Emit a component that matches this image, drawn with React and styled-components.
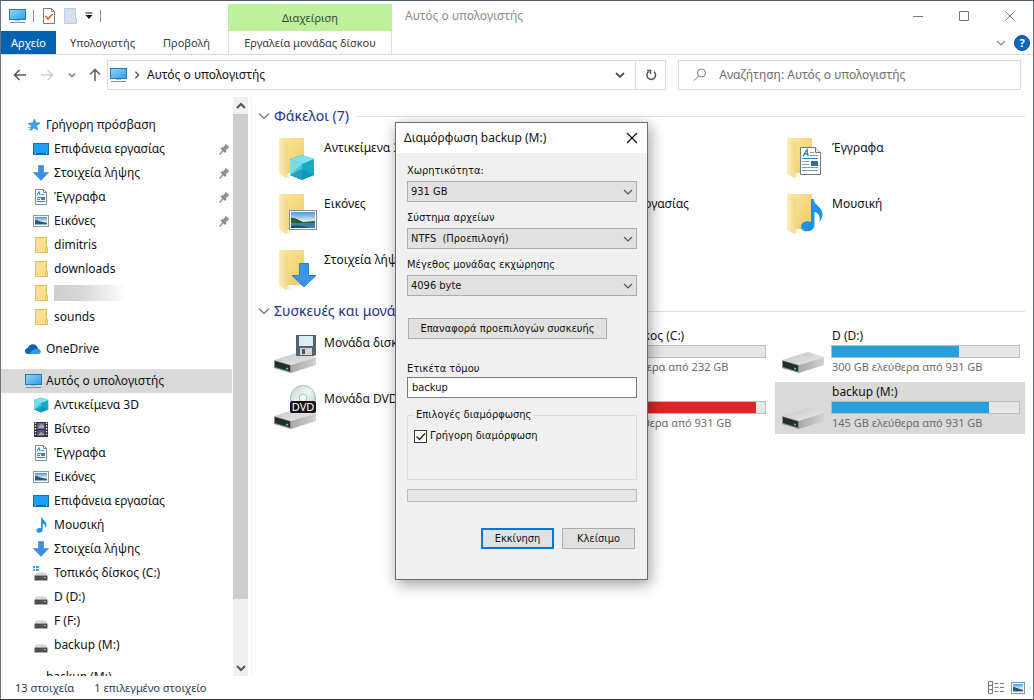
import React from "react";
import styled, { createGlobalStyle, css } from "styled-components";

const uiFont = '"Noto Sans", "Open Sans", sans-serif';
const dialogFont = '"DejaVu Sans Condensed", "DejaVu Sans", sans-serif';

const GlobalStyle = createGlobalStyle`
  *, *::before, *::after { box-sizing: border-box; }
  body { margin: 0; background: #fff; font: 12px/16px ${uiFont}; color: #111; }
  button, input, select { font: inherit; color: inherit; margin: 0; border-radius: 0; }
  svg { display: block; flex: none; }
`;

/* ---------- window frame ---------- */

const Window = styled.div`
  position: relative;
  display: flex;
  flex-direction: column;
  height: 100vh;
  min-height: 600px;
  border: 1px solid #66727e;
  border-top-color: #4c5a68;
  border-bottom-color: #3c3c3c;
  background: #fff;
  overflow: hidden;
`;

const plainButton = css`
  display: flex;
  align-items: center;
  justify-content: center;
  padding: 0;
  border: 0;
  background: none;
  white-space: nowrap;
`;

const Ribbon = styled.header`
  display: flex;
  flex: none;
  height: 54px;
  border-bottom: 1px solid #d9dadb;
`;

const RibbonLeft = styled.div`
  display: flex;
  flex-direction: column;
  width: 227px;
`;

const QuickBar = styled.div`
  display: flex;
  align-items: center;
  gap: 7px;
  height: 30px;
  padding-left: 8px;
`;

const Divider = styled.span`
  width: 1px;
  height: 12px;
  background: #8a8a8a;
`;

const IconButton = styled.button`
  ${plainButton}
`;

const TabRow = styled.div`
  display: flex;
  height: 23px;
  font-size: 11px;
`;

const Tab = styled.button`
  ${plainButton}
  padding: 0 ${(p) => (p.$primary ? 10 : 14)}px;
  color: ${(p) => (p.$primary ? "#fff" : "#3a3a3a")};
  background: ${(p) => (p.$primary ? "#0063b1" : "none")};
`;

const ContextTab = styled.div`
  display: flex;
  flex-direction: column;
  width: 164px;
  padding-top: 3px;
  font-size: 11px;
`;

const ContextTitle = styled.div`
  display: flex;
  align-items: center;
  justify-content: center;
  height: 27px;
  background: #bff09c;
  color: #3a4a30;
`;

const ContextButton = styled.button`
  ${plainButton}
  height: 23px;
  border: solid #dcdcdc;
  border-width: 0 1px;
  color: #3a3a3a;
`;

const RibbonRight = styled.div`
  display: flex;
  flex: 1;
  flex-direction: column;
`;

const TitleRow = styled.div`
  display: flex;
  align-items: center;
  height: 30px;
  padding-left: 13px;
`;

const WindowTitle = styled.h1`
  flex: 1;
  margin: 0;
  font-size: 12px;
  font-weight: 400;
  color: #8b8b8b;
`;

const CaptionButton = styled.button`
  ${plainButton}
  width: 46px;
  height: 30px;
`;

const RibbonTools = styled.div`
  display: flex;
  align-items: center;
  justify-content: flex-end;
  gap: 8px;
  height: 23px;
  padding-right: 3px;
`;

/* ---------- address row ---------- */

const AddressRow = styled.div`
  display: flex;
  flex: none;
  align-items: center;
  height: 42px;
  padding: 0 12px 2px;
`;

const NavButtons = styled.div`
  display: flex;
  align-items: center;
  justify-content: space-between;
  width: 88px;
  margin-right: 6px;
`;

const AddressBox = styled.nav`
  display: flex;
  align-items: center;
  flex: 1;
  height: 30px;
  padding-left: 2px;
  border: 1px solid #d9d9d9;
`;

const Crumb = styled.button`
  ${plainButton}
  margin-left: 6px;
`;

const AddressDrop = styled.button`
  ${plainButton}
  width: 30px;
  height: 28px;
  margin-left: auto;
`;

const Refresh = styled.button`
  ${plainButton}
  width: 30px;
  height: 30px;
  border: 1px solid #d9d9d9;
  border-left: 0;
`;

const SearchBox = styled.label`
  display: flex;
  align-items: center;
  gap: 12px;
  flex: 0 0 34%;
  height: 30px;
  margin-left: 12px;
  padding-left: 14px;
  border: 1px solid #d9d9d9;
`;

const SearchInput = styled.input`
  flex: 1;
  min-width: 0;
  padding: 0;
  border: 0;
  outline: 0;
  background: none;
  &::placeholder { color: #6d6d6d; opacity: 1; }
`;

/* ---------- sidebar ---------- */

const Body = styled.div`
  display: flex;
  flex: 1;
  min-height: 0;
`;

const Sidebar = styled.aside`
  display: flex;
  flex: none;
  width: 251px;
  padding-right: 3px;
  border-right: 1px solid #f3f3f3;
`;

const Tree = styled.nav`
  flex: 1;
  padding-top: 16px;
  overflow: hidden;
`;

const TreeGroup = styled.ul`
  margin: 0 0 8px;
  padding: 0;
  list-style: none;
`;

const TreeLink = styled.a`
  display: flex;
  align-items: center;
  gap: 4px;
  height: 24px;
  padding: 0 2px 0 ${(p) => (p.$root ? 24 : 32)}px;
  margin-right: 1px;
  color: #111;
  text-decoration: none;
  white-space: nowrap;
  background: ${(p) => (p.$selected ? "#d9d9d9" : "none")};
`;

const TreeText = styled.span`
  flex: 1;
`;

const Redacted = styled.span`
  width: 72px;
  height: 16px;
  background: linear-gradient(90deg, #cfcfcf, #d8d8d8 40%, #fff);
`;

const ScrollBar = styled.div`
  display: flex;
  flex-direction: column;
  width: 15px;
  background: #f0f0f0;
`;

const ScrollButton = styled.button`
  ${plainButton}
  height: 17px;
`;

const ScrollTrack = styled.div`
  flex: 1;
`;

const ScrollThumb = styled.div`
  height: 89%;
  background: #cdcdcd;
`;

/* ---------- file list ---------- */

const Content = styled.main`
  flex: 1;
  min-width: 0;
  padding: 9px 8px 0 6px;
`;

const Group = styled.section`
  margin-bottom: 6px;
`;

const GroupHeader = styled.h2`
  display: flex;
  align-items: center;
  height: 20px;
  margin: 0 0 5px;
  font-size: 14px;
  font-weight: 400;
  line-height: 20px;
  color: #1e3287;
  white-space: nowrap;
  &::after {
    content: "";
    flex: 1;
    height: 1px;
    margin-left: 7px;
    background: #e2e2e2;
  }
`;

const GroupTitle = styled.span`
  margin-left: 4px;
`;

const TileGrid = styled.div`
  display: grid;
  grid-template-columns: repeat(3, 1fr);
  gap: 4px;
  padding-left: 9px;
`;

const TileBox = styled.a`
  display: flex;
  gap: 5px;
  height: 52px;
  padding: 2px 5px 0 4px;
  color: #111;
  text-decoration: none;
  white-space: nowrap;
  background: ${(p) => (p.$selected ? "#d9d9d9" : "none")};
`;

const TileText = styled.div`
  display: flex;
  flex: 1;
  flex-direction: column;
  min-width: 0;
  padding-top: ${(p) => (p.$drive ? 0 : 7)}px;
`;

const Meter = styled.div`
  height: 13px;
  margin: 1px 0 0 -1px;
  border: 1px solid #bcbcbc;
  background: #e6e6e6;
`;

const MeterFill = styled.div`
  height: 100%;
  background: ${(p) => (p.$full ? "#da2626" : "#26a0da")};
`;

const FreeSpace = styled.span`
  margin-top: 1px;
  font-size: 11px;
  color: #6d6d6d;
`;

/* ---------- status bar ---------- */

const StatusBar = styled.footer`
  display: flex;
  flex: none;
  align-items: center;
  gap: 20px;
  height: 23px;
  padding: 0 8px 0 14px;
  font-size: 11px;
  color: #1e395b;
`;

const ViewButtons = styled.div`
  display: flex;
  gap: 7px;
  margin-left: auto;
`;

/* ---------- format dialog ---------- */

const Dialog = styled.form`
  position: absolute;
  left: 394px;
  top: 121px;
  width: 253px;
  border: 1px solid #6e6e6e;
  background: #f0f0f0;
  box-shadow: 2px 4px 14px rgba(0, 0, 0, 0.4);
  font: 11px/16px ${dialogFont};
`;

const DialogTitle = styled.div`
  display: flex;
  align-items: center;
  justify-content: space-between;
  height: 30px;
  padding: 0 9px 0 8px;
  background: #fff;
  font: 12px/16px ${uiFont};
`;

const DialogBody = styled.div`
  display: flex;
  flex-direction: column;
  padding: 10px 10px 30px 11px;
`;

const Field = styled.div`
  display: flex;
  flex-direction: column;
  gap: ${(p) => (p.$tight ? 0 : 2)}px;
  margin-bottom: 8px;
`;

const SelectWrap = styled.div`
  display: grid;
  align-items: center;
  & > * { grid-area: 1 / 1; }
  & > svg { justify-self: end; margin-right: 4px; pointer-events: none; }
`;

const Select = styled.select`
  appearance: none;
  height: 21px;
  padding: 0 20px 0 3px;
  border: 1px solid #adadad;
  background: #e1e1e1;
`;

const TextInput = styled.input`
  height: 21px;
  padding: 0 4px;
  border: 1px solid #7a7a7a;
  background: #fff;
`;

const PushButton = styled.button`
  ${plainButton}
  width: ${(p) => (p.$wide ? 199 : 73)}px;
  height: 21px;
  border: ${(p) => (p.$default ? "2px solid #0078d7" : "1px solid #adadad")};
  background: #e1e1e1;
`;

const RestoreRow = styled.div`
  padding: 14px 1px 22px;
`;

const Options = styled.fieldset`
  height: 73px;
  margin: 1px 0 9px;
  padding: 5px 6px 0;
  border: 1px solid #dcdcdc;
`;

const Legend = styled.legend`
  padding: 0 2px;
`;

const CheckLabel = styled.label`
  display: flex;
  align-items: center;
  gap: 3px;
`;

const CheckBox = styled.span`
  display: grid;
  & > * { grid-area: 1 / 1; }
  & > svg { pointer-events: none; }
`;

const CheckInput = styled.input`
  appearance: none;
  width: 13px;
  height: 13px;
  border: 1px solid #333;
  background: #fff;
`;

const FormatProgress = styled.div`
  height: 13px;
  border: 1px solid #bcbcbc;
  background: #e6e6e6;
`;

const Actions = styled.div`
  display: flex;
  justify-content: flex-end;
  gap: 8px;
  margin-top: 26px;
  padding-right: 2px;
`;

/* ---------- drawings ---------- */

const DefsSvg = styled.svg`
  position: absolute;
`;

const Defs = () => (
  <DefsSvg width="0" height="0" aria-hidden="true">
    <defs>
      <linearGradient id="screen" x1="0" y1="0" x2="1" y2="1">
        <stop offset="0" stopColor="#8ed8fb" />
        <stop offset="1" stopColor="#2e9de8" />
      </linearGradient>
      <linearGradient id="folderBack" x1="0" y1="0" x2="1" y2="1">
        <stop offset="0" stopColor="#fbe8a2" />
        <stop offset="1" stopColor="#edca62" />
      </linearGradient>
      <linearGradient id="folderFlap" x1="0" y1="0" x2="1" y2="0">
        <stop offset="0" stopColor="#fdeeb8" />
        <stop offset="1" stopColor="#f0d684" />
      </linearGradient>
      <linearGradient id="driveTop" x1="0" y1="0" x2="1" y2="1">
        <stop offset="0" stopColor="#c3c3c3" />
        <stop offset="1" stopColor="#ececec" />
      </linearGradient>
      <linearGradient id="driveSide" x1="0" y1="0" x2="1" y2="0">
        <stop offset="0" stopColor="#a9a9a9" />
        <stop offset="1" stopColor="#d2d2d2" />
      </linearGradient>
      <linearGradient id="sky" x1="0" y1="0" x2="0" y2="1">
        <stop offset="0" stopColor="#4d97d8" />
        <stop offset="0.55" stopColor="#d6eaf3" />
        <stop offset="1" stopColor="#7eb0c4" />
      </linearGradient>
      <linearGradient id="disc" x1="0" y1="0" x2="1" y2="1">
        <stop offset="0" stopColor="#c3d8d3" />
        <stop offset="0.5" stopColor="#eef6f4" />
        <stop offset="1" stopColor="#aac5bf" />
      </linearGradient>
    </defs>
  </DefsSvg>
);

const Chevron = ({ size = 10, color = "#555", width = 1.2, turn = 0 }) => (
  <svg width={size} height={size} viewBox="0 0 10 10" fill="none" stroke={color} strokeWidth={width}>
    <path d="M1 3l4 4 4-4" transform={`rotate(${turn} 5 5)`} />
  </svg>
);

const PcIcon = () => (
  <svg width="17" height="16" viewBox="0 0 17 16">
    <rect x="0.5" y="1.5" width="16" height="10" fill="url(#screen)" stroke="#2b78ad" />
    <path d="M6 12h5v1H6z" fill="#a9bcc9" />
    <path d="M1 14.5h15" stroke="#6f93ab" />
  </svg>
);

const DesktopIcon = () => (
  <svg width="17" height="16" viewBox="0 0 17 16">
    <rect x="0.5" y="2.5" width="15" height="11" fill="#1ba0f5" stroke="#1471ad" />
    <path d="M1 12.5h14" stroke="#0c5d96" />
    <path d="M2 12.5h1M13 12.5h1" stroke="#d7efff" />
  </svg>
);

const DownIcon = () => (
  <svg width="17" height="16" viewBox="0 0 17 16">
    <path d="M5.5 0.5h5v7h5L8 15.5 0.5 7.5h5z" fill="#3b8fe0" stroke="#3b7fc0" strokeWidth="0.6" />
  </svg>
);

const DocIcon = () => (
  <svg width="17" height="16" viewBox="0 0 17 16">
    <path d="M2.5 0.5h8l3 3v12h-11z" fill="#fff" stroke="#7f8c96" />
    <path d="M10.5 0.5v3h3" fill="none" stroke="#7f8c96" />
    <path d="M4 6l2-3.500 1 3.500M8 5.500h3M4 8.500h8M4 10.500h3M4 12.500h8" fill="none" stroke="#2b86c4" />
    <path d="M8 9h4v2H8z" fill="#2b86c4" />
  </svg>
);

const PictureIcon = () => (
  <svg width="17" height="16" viewBox="0 0 17 16">
    <rect x="0.5" y="2.5" width="15" height="11" fill="#fff" stroke="#8797a3" />
    <rect x="2" y="4" width="12" height="8" fill="url(#sky)" />
    <path d="M2 7c3 0 5 2 12 3v1H2z" fill="#2c5a70" />
  </svg>
);

const SmallFolder = () => (
  <svg width="17" height="16" viewBox="0 0 17 16">
    <path d="M2.500 0.500h11v9.500h1v5.500h-12z" fill="#fbe08b" stroke="#e3bd58" />
    <path d="M12.500 10v5" stroke="#e3bd58" />
  </svg>
);

const StarIcon = () => (
  <svg width="17" height="16" viewBox="0 0 17 16">
    <path d="M9.500 2l1.200 3.800 4.300 0.200-3.400 2.800 1 4.300-3.600-2.300-3.500 2.700 0.900-4.300L3.500 6.300l4.300-0.400z" fill="#3ba4e6" stroke="#2183c4" strokeWidth="0.7" />
    <path d="M3 10.500h3M3.500 12.500h2" stroke="#6bbbec" />
  </svg>
);

const CloudIcon = () => (
  <svg width="17" height="16" viewBox="0 0 17 16">
    <path d="M3 13a3 3 0 0 1 0-6 5 5 0 0 1 9-1.500L14 9l-2 4z" fill="#0f5fb8" />
    <path d="M4 13c2-3 6-6 9.500-5 3 0.500 3.500 5-0.500 5z" fill="#2a9be8" />
  </svg>
);

const CubeShape = () => (
  <>
    <path d="M12 0l12 4v16l-12 5L0 20V4z" fill="#19a9c4" />
    <path d="M12 0l12 4-12 5L0 4z" fill="#7be3ee" />
    <path d="M0 4l12 5v16L0 20z" fill="#43c7dc" />
    <path d="M0 20l12-6 12 6-12 5z" fill="#0f8fb0" opacity="0.7" />
    <path d="M12 9L0 20V4z" fill="#a5eef4" opacity="0.55" />
  </>
);

const CubeIcon = () => (
  <svg width="17" height="16" viewBox="0 -1 25 27">
    <CubeShape />
  </svg>
);

const VideoIcon = () => (
  <svg width="17" height="16" viewBox="0 0 17 16">
    <rect x="1" y="1" width="14" height="15" fill="#2e3238" />
    <path d="M2.500 1.500v14M13.500 1.500v14" stroke="#e6e6e6" strokeWidth="1.400" strokeDasharray="1.400 1.400" />
    <rect x="4.500" y="2" width="7" height="6" fill="#5a6ab4" />
    <rect x="4.500" y="9" width="7" height="6" fill="#4a5aa6" />
    <path d="M5 7l3-4 3 2v2zM5 14l3-3 3 2v1z" fill="#c9a84a" />
  </svg>
);

const NoteShape = () => (
  <path d="M10 0h2.500c0.500 6 9 8 9 15 0 3-1 5-3 8 1-6-1-9-5-10v13c0 8-13.500 8-13.500 2 0-5 6-7 10-5z" fill="#1a93ea" />
);

const MusicIcon = () => (
  <svg width="17" height="16" viewBox="-6 -1 34 34">
    <NoteShape />
  </svg>
);

const SmallDrive = ({ system }) => (
  <svg width="17" height="16" viewBox="0 0 17 16">
    <path d="M3.500 7.500h9l2 3h-13z" fill="#d3d6d8" />
    <rect x="1.500" y="10.500" width="13" height="5" rx="0.500" fill="#4a4e50" />
    <rect x="11" y="12" width="2" height="1" fill="#59d86b" />
    {system && <path d="M0 1h2v2H0zM3 1h3v2H3zM0 4h2v2H0zM3 4h3v2H3z" fill="#2bace2" />}
  </svg>
);

const PinIcon = () => (
  <svg width="11" height="12" viewBox="0 0 11 12">
    <path d="M6.500 0.500l4 4-1.500 0.500-1.800 2v2L6 10 1.500 5.500l1-1.200h2l1.500-2z" fill="#87919a" />
    <path d="M4 7.500L0.500 11.500" stroke="#87919a" strokeWidth="1.200" />
  </svg>
);

const FolderBase = () => (
  <>
    <path d="M8 5h25v35H17z" fill="url(#folderBack)" />
    <path d="M8 5l9 5v30l-1 5-8-4z" fill="url(#folderFlap)" />
    <path d="M17 40l2 1v3l-3 1z" fill="#fff3cf" />
  </>
);

const LandscapeShape = () => (
  <>
    <rect x="18.500" y="21.500" width="27" height="19" fill="#fff" stroke="#7c8c96" />
    <rect x="20" y="23" width="24" height="16" fill="url(#sky)" />
    <path d="M20 29c4-1 7 2 12 4l12-1v2H20z" fill="#2f5b35" />
    <path d="M20 34h24v5H20z" fill="#3c7f9e" />
    <path d="M20 37c6-1 14 0 18 2H20z" fill="#1f4d66" />
  </>
);

const PageShape = () => (
  <>
    <path d="M21.500 14.500h15l5 5v22h-20z" fill="#fff" stroke="#6f7a82" />
    <path d="M36.500 14.500v5h5" fill="#e9eef1" stroke="#6f7a82" />
    <path d="M24 23l4-6.500 1 6.500M25.500 21h4" fill="none" stroke="#1d86c8" strokeWidth="1.300" />
    <path d="M31 19.500h4M31 22.500h8M23 28.500h7M23 31.500h7M23 34.500h16M23 37.500h16" stroke="#6ba4c6" />
    <path d="M23 25.500h16" stroke="#1d86c8" />
    <rect x="32" y="28" width="7" height="5" fill="#2d6f9e" />
  </>
);

const BigFolder = ({ kind }) => (
  <svg width="48" height="48" viewBox="0 0 48 48">
    <FolderBase />
    {kind === "cube" && <g transform="translate(19 22)"><CubeShape /></g>}
    {kind === "picture" && <LandscapeShape />}
    {kind === "down" && <path d="M28.500 18.500h9v12h7.500L33 42 21 30.500h7.500z" fill="#3b96e6" stroke="#2f7fc9" />}
    {kind === "page" && <PageShape />}
    {kind === "note" && <g transform="translate(22 10)"><NoteShape /></g>}
    {kind === "desktop" && <rect x="19" y="22" width="26" height="18" fill="#1ba0f5" stroke="#1471ad" />}
    {kind === "video" && <rect x="22" y="16" width="20" height="25" fill="#5a6ab4" stroke="#2e3238" strokeWidth="3" />}
  </svg>
);

const DriveShape = () => (
  <>
    <path d="M3 32l26-8 16 5-25 8z" fill="url(#driveTop)" />
    <path d="M20 37l25-8v8l-25 8z" fill="url(#driveSide)" />
    <path d="M3 32l17 5v8L3 40z" fill="#8d8d8d" />
    <path d="M4 33l15 4.500v6l-15-4.500z" fill="#23302a" />
    <path d="M15 39.500l2 0.600v1.600l-2-0.600z" fill="#41e05a" />
  </>
);

const BigDrive = ({ kind }) => (
  <svg width="48" height="48" viewBox="0 0 48 48">
    {kind === "disc" && (
      <>
        <circle cx="32" cy="14" r="12.500" fill="url(#disc)" stroke="#a5bab5" />
        <circle cx="32" cy="14" r="4" fill="#f7fbfa" stroke="#a5bab5" />
      </>
    )}
    <DriveShape />
    {kind === "floppy" && (
      <>
        <path d="M25 7h20v20l-2 1H25z" fill="#55636e" />
        <rect x="28" y="8" width="14" height="10" fill="#d9edf7" />
        <rect x="29" y="20" width="12" height="7" fill="#d4d4d4" />
        <rect x="31" y="21" width="3" height="5" fill="#4f5b64" />
      </>
    )}
    {kind === "disc" && (
      <>
        <rect x="19" y="17" width="26" height="12" rx="2" fill="#151515" />
        <text x="32" y="27" textAnchor="middle" fontFamily="Noto Sans" fontSize="11" fill="#fff">DVD</text>
      </>
    )}
  </svg>
);

/* ---------- data ---------- */

const quickAccess = [
  { text: "Γρήγορη πρόσβαση", icon: <StarIcon />, root: true },
  { text: "Επιφάνεια εργασίας", icon: <DesktopIcon />, pin: true },
  { text: "Στοιχεία λήψης", icon: <DownIcon />, pin: true },
  { text: "Έγγραφα", icon: <DocIcon />, pin: true },
  { text: "Εικόνες", icon: <PictureIcon />, pin: true },
  { text: "dimitris", icon: <SmallFolder /> },
  { text: "downloads", icon: <SmallFolder /> },
  { text: "", icon: <SmallFolder /> },
  { text: "sounds", icon: <SmallFolder /> },
];

const thisPc = [
  { text: "Αυτός ο υπολογιστής", icon: <PcIcon />, root: true, selected: true },
  { text: "Αντικείμενα 3D", icon: <CubeIcon /> },
  { text: "Βίντεο", icon: <VideoIcon /> },
  { text: "Έγγραφα", icon: <DocIcon /> },
  { text: "Εικόνες", icon: <PictureIcon /> },
  { text: "Επιφάνεια εργασίας", icon: <DesktopIcon /> },
  { text: "Μουσική", icon: <MusicIcon /> },
  { text: "Στοιχεία λήψης", icon: <DownIcon /> },
  { text: "Τοπικός δίσκος (C:)", icon: <SmallDrive system /> },
  { text: "D (D:)", icon: <SmallDrive /> },
  { text: "F (F:)", icon: <SmallDrive /> },
  { text: "backup (M:)", icon: <SmallDrive /> },
];

const tree = [
  quickAccess,
  [{ text: "OneDrive", icon: <CloudIcon />, root: true }],
  thisPc,
  [{ text: "backup (M:)", icon: <SmallDrive />, root: true }],
];

const folders = [
  ["Αντικείμενα 3D", "cube"],
  ["Βίντεο", "video"],
  ["Έγγραφα", "page"],
  ["Εικόνες", "picture"],
  ["Επιφάνεια εργασίας", "desktop"],
  ["Μουσική", "note"],
  ["Στοιχεία λήψης", "down"],
];

const drives = [
  { name: "Μονάδα δισκέτας (A:)", kind: "floppy" },
  { name: "Τοπικός δίσκος (C:)", used: 36, free: "149 GB ελεύθερα από 232 GB" },
  { name: "D (D:)", used: 68, free: "300 GB ελεύθερα από 931 GB" },
  { name: "Μονάδα DVD RW (E:)", kind: "disc" },
  { name: "F (F:)", used: 95, full: true, free: "46,4 GB ελεύθερα από 931 GB" },
  { name: "backup (M:)", used: 84, free: "145 GB ελεύθερα από 931 GB", selected: true },
];

const fields = [
  ["capacity", "Χωρητικότητα:", "931 GB"],
  ["filesystem", "Σύστημα αρχείων", "NTFS\u00a0 (Προεπιλογή)"],
  ["unit", "Μέγεθος μονάδας εκχώρησης", "4096 byte"],
];

/* ---------- parts ---------- */

const TreeItem = ({ text, icon, root, selected, pin }) => (
  <li>
    <TreeLink href="#" $root={root} $selected={selected} aria-label={text || "folder"}>
      {icon}
      {text ? <TreeText>{text}</TreeText> : <Redacted />}
      {pin && <PinIcon />}
    </TreeLink>
  </li>
);

const DriveTile = ({ name, kind, used, full, free, selected }) => (
  <TileBox href="#" $selected={selected}>
    <BigDrive kind={kind} />
    <TileText $drive={!!free}>
      <span>{name}</span>
      {free && (
        <>
          <Meter role="meter" aria-label={name} aria-valuenow={used} aria-valuemin={0} aria-valuemax={100}>
            <MeterFill $full={full} style={{ width: `${used}%` }} />
          </Meter>
          <FreeSpace>{free}</FreeSpace>
        </>
      )}
    </TileText>
  </TileBox>
);

const FormatDialog = () => (
  <Dialog role="dialog" aria-label="Διαμόρφωση backup (M:)" onSubmit={(e) => e.preventDefault()}>
    <DialogTitle>
      <span>Διαμόρφωση backup (M:)</span>
      <IconButton type="button" aria-label="Κλείσιμο παραθύρου">
        <svg width="12" height="12" viewBox="0 0 12 12" stroke="#111" strokeWidth="1.200">
          <path d="M1 1l10 10M11 1L1 11" />
        </svg>
      </IconButton>
    </DialogTitle>
    <DialogBody>
      {fields.map(([id, label, value]) => (
        <Field key={id}>
          <label htmlFor={id}>{label}</label>
          <SelectWrap>
            <Select id={id}>
              <option>{value}</option>
            </Select>
            <Chevron />
          </SelectWrap>
        </Field>
      ))}
      <RestoreRow>
        <PushButton type="button" $wide>Επαναφορά προεπιλογών συσκευής</PushButton>
      </RestoreRow>
      <Field $tight>
        <label htmlFor="volume">Ετικέτα τόμου</label>
        <TextInput id="volume" defaultValue="backup" />
      </Field>
      <Options>
        <Legend>Επιλογές διαμόρφωσης</Legend>
        <CheckLabel>
          <CheckBox>
            <CheckInput type="checkbox" defaultChecked />
            <svg width="13" height="13" viewBox="0 0 13 13" fill="none" stroke="#222" strokeWidth="1.300">
              <path d="M2.500 6.500l3 3 5.500-6" />
            </svg>
          </CheckBox>
          Γρήγορη διαμόρφωση
        </CheckLabel>
      </Options>
      <FormatProgress role="progressbar" aria-label="Πρόοδος" />
      <Actions>
        <PushButton $default>Εκκίνηση</PushButton>
        <PushButton type="button">Κλείσιμο</PushButton>
      </Actions>
    </DialogBody>
  </Dialog>
);

export default function App() {
  return (
    <>
      <GlobalStyle />
      <Defs />
      <Window>
        <Ribbon>
          <RibbonLeft>
            <QuickBar>
              <PcIcon />
              <Divider />
              <IconButton aria-label="Ιδιότητες">
                <svg width="16" height="16" viewBox="0 0 16 16">
                  <path d="M2.500 0.500h8l3 3v12h-11z" fill="#fff" stroke="#7a7a7a" />
                  <path d="M10.500 0.500v3h3" fill="none" stroke="#7a7a7a" />
                  <path d="M4.500 8l2.500 3 4.500-5" fill="none" stroke="#e0622a" strokeWidth="1.600" />
                </svg>
              </IconButton>
              <IconButton aria-label="Νέος φάκελος">
                <svg width="14" height="16" viewBox="0 0 14 16">
                  <path d="M0.500 0.500h11v9.500h1v5.500h-12z" fill="#d5dfec" stroke="#bccbdd" />
                </svg>
              </IconButton>
              <IconButton aria-label="Προσαρμογή">
                <svg width="8" height="8" viewBox="0 0 8 8">
                  <path d="M0.500 1h7" stroke="#111" />
                  <path d="M0.500 3h7L4 7z" fill="#111" />
                </svg>
              </IconButton>
              <Divider />
            </QuickBar>
            <TabRow>
              <Tab $primary>Αρχείο</Tab>
              <Tab>Υπολογιστής</Tab>
              <Tab>Προβολή</Tab>
            </TabRow>
          </RibbonLeft>
          <ContextTab>
            <ContextTitle>Διαχείριση</ContextTitle>
            <ContextButton>Εργαλεία μονάδας δίσκου</ContextButton>
          </ContextTab>
          <RibbonRight>
            <TitleRow>
              <WindowTitle>Αυτός ο υπολογιστής</WindowTitle>
              <CaptionButton aria-label="Ελαχιστοποίηση">
                <svg width="10" height="10" viewBox="0 0 10 10" stroke="#777"><path d="M0 5.500h10" /></svg>
              </CaptionButton>
              <CaptionButton aria-label="Μεγιστοποίηση">
                <svg width="10" height="10" viewBox="0 0 10 10" fill="none" stroke="#777"><path d="M0.500 0.500h9v9h-9z" /></svg>
              </CaptionButton>
              <CaptionButton aria-label="Κλείσιμο">
                <svg width="10" height="10" viewBox="0 0 10 10" stroke="#777"><path d="M0.500 0.500l9 9M9.500 0.500l-9 9" /></svg>
              </CaptionButton>
            </TitleRow>
            <RibbonTools>
              <IconButton aria-label="Ανάπτυξη κορδέλας"><Chevron color="#888" /></IconButton>
              <IconButton aria-label="Βοήθεια">
                <svg width="16" height="16" viewBox="0 0 16 16">
                  <circle cx="8" cy="8" r="7.500" fill="#0d68bd" stroke="#0a4f94" />
                  <text x="8" y="12" textAnchor="middle" fontFamily="Noto Sans" fontWeight="700" fontSize="11" fill="#fff">?</text>
                </svg>
              </IconButton>
            </RibbonTools>
          </RibbonRight>
        </Ribbon>

        <AddressRow>
          <NavButtons>
            <IconButton aria-label="Πίσω">
              <svg width="14" height="12" viewBox="0 0 14 12" fill="none" stroke="#555" strokeWidth="1.500"><path d="M13 6H2M6.500 1L1.500 6l5 5" /></svg>
            </IconButton>
            <IconButton aria-label="Εμπρός">
              <svg width="14" height="12" viewBox="0 0 14 12" fill="none" stroke="#d0d0d0" strokeWidth="1.500"><path d="M1 6h11M7.500 1l5 5-5 5" /></svg>
            </IconButton>
            <IconButton aria-label="Πρόσφατες θέσεις"><Chevron size={8} width={1.8} color="#777" /></IconButton>
            <IconButton aria-label="Επάνω">
              <svg width="12" height="14" viewBox="0 0 12 14" fill="none" stroke="#666" strokeWidth="1.600"><path d="M6 13V2M1 6.500l5-5 5 5" /></svg>
            </IconButton>
          </NavButtons>
          <AddressBox aria-label="Διεύθυνση">
            <PcIcon />
            <Crumb aria-label="Θέσεις">
              <Chevron size={8} width={1.8} turn={-90} />
            </Crumb>
            <Crumb>Αυτός ο υπολογιστής</Crumb>
            <AddressDrop aria-label="Προηγούμενες θέσεις"><Chevron width={1.8} /></AddressDrop>
          </AddressBox>
          <Refresh aria-label="Ανανέωση">
            <svg width="12" height="12" viewBox="0 0 12 12" fill="none" stroke="#555" strokeWidth="1.500">
              <path d="M9 2.800A4.300 4.300 0 1 1 3.600 2.700" />
              <path d="M2 1.500h3.500V5" />
            </svg>
          </Refresh>
          <SearchBox>
            <svg width="14" height="14" viewBox="0 0 14 14" fill="none" stroke="#777">
              <circle cx="8.500" cy="5" r="4" />
              <path d="M5.500 8L1 12.500" />
            </svg>
            <SearchInput aria-label="Αναζήτηση" placeholder="Αναζήτηση: Αυτός ο υπολογιστής" />
          </SearchBox>
        </AddressRow>

        <Body>
          <Sidebar>
            <Tree aria-label="Περιήγηση">
              {tree.map((items, i) => (
                <TreeGroup key={i}>
                  {items.map((item) => <TreeItem key={item.text} {...item} />)}
                </TreeGroup>
              ))}
            </Tree>
            <ScrollBar>
              <ScrollButton aria-label="Κύλιση επάνω"><Chevron turn={180} width={2} /></ScrollButton>
              <ScrollTrack><ScrollThumb /></ScrollTrack>
              <ScrollButton aria-label="Κύλιση κάτω"><Chevron width={2} /></ScrollButton>
            </ScrollBar>
          </Sidebar>

          <Content>
            <Group>
              <GroupHeader>
                <Chevron size={12} color="#666" width={1} />
                <GroupTitle>Φάκελοι (7)</GroupTitle>
              </GroupHeader>
              <TileGrid>
                {folders.map(([name, kind]) => (
                  <TileBox key={name} href="#">
                    <BigFolder kind={kind} />
                    <TileText><span>{name}</span></TileText>
                  </TileBox>
                ))}
              </TileGrid>
            </Group>
            <Group>
              <GroupHeader>
                <Chevron size={12} color="#666" width={1} />
                <GroupTitle>Συσκευές και μονάδες δίσκου (6)</GroupTitle>
              </GroupHeader>
              <TileGrid>
                {drives.map((drive) => <DriveTile key={drive.name} {...drive} />)}
              </TileGrid>
            </Group>
          </Content>
        </Body>

        <StatusBar>
          <span>13 στοιχεία</span>
          <span>1 επιλεγμένο στοιχείο</span>
          <ViewButtons>
            <IconButton aria-label="Λεπτομέρειες">
              <svg width="16" height="13" viewBox="0 0 16 13" fill="none" stroke="#707a84">
                <path d="M0.500 0.500h4v12h-4zM0.500 4.500h4M0.500 8.500h4M6.500 2.500h4M12 2.500h4M6.500 6.500h4M12 6.500h4M6.500 10.500h4M12 10.500h4" />
              </svg>
            </IconButton>
            <IconButton aria-label="Μεγάλα εικονίδια">
              <svg width="14" height="12" viewBox="0 0 14 12">
                <rect x="0.500" y="0.500" width="13" height="11" fill="#fff" stroke="#6f9fb8" />
                <rect x="2" y="2" width="10" height="8" fill="url(#sky)" />
                <path d="M2 5c3 0 5 2 10 3v1H2z" fill="#2c5a70" />
              </svg>
            </IconButton>
          </ViewButtons>
        </StatusBar>
        <FormatDialog />
      </Window>
    </>
  );
}
